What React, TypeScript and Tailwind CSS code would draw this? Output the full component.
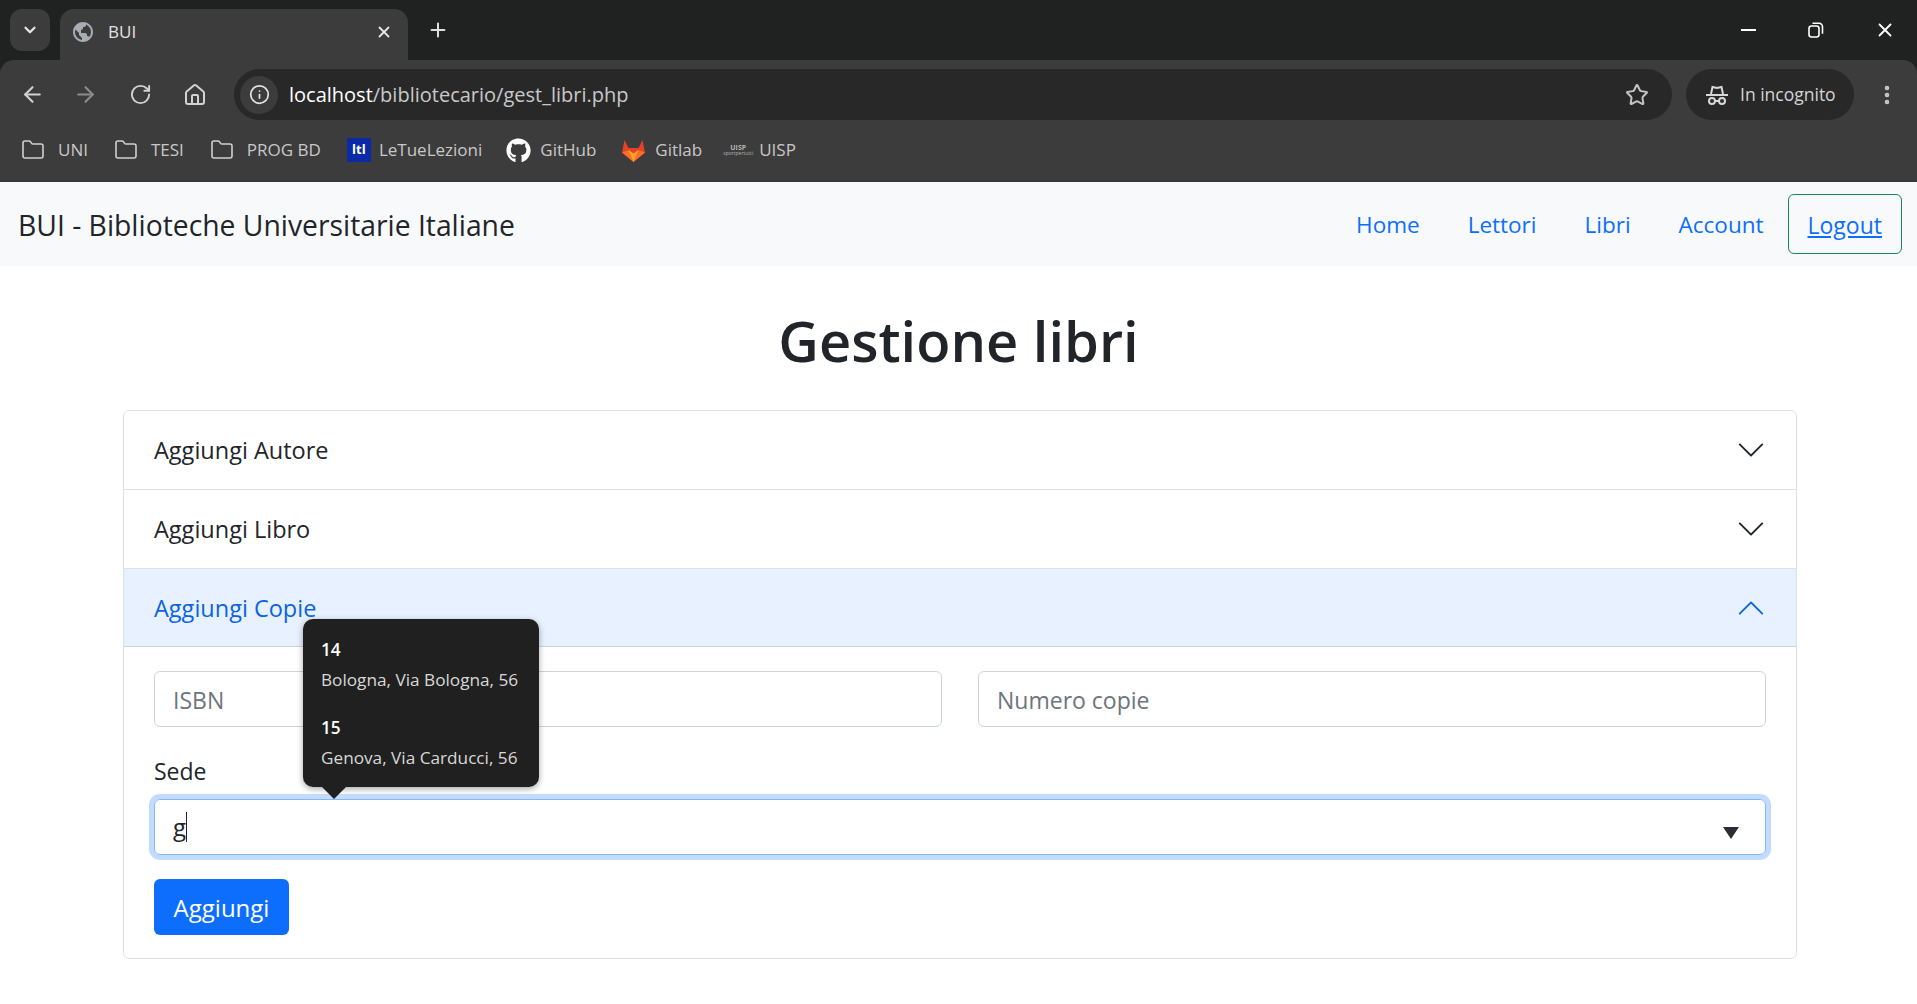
import { ArrowLeft, ArrowRight, ChevronDown, Folder, Home, Info, MoreVertical, Plus, RotateCw, Star, X } from 'lucide-react'
import { FaGithub } from 'react-icons/fa'
import { BiWorld } from 'react-icons/bi'

const BOOT_CHEVRON = 'M1.646 4.646a.5.5 0 0 1 .708 0L8 10.293l5.646-5.647a.5.5 0 0 1 .708.708l-6 6a.5.5 0 0 1-.708 0l-6-6a.5.5 0 0 1 0-.708z'

function Chevron({ up }: { up?: boolean }) {
  return (
    <svg viewBox="0 0 16 16" className={up ? 'w-[30px] h-[30px] rotate-180 fill-[#0c63e4]' : 'w-[30px] h-[30px] fill-[#212529]'}>
      <path fillRule="evenodd" d={BOOT_CHEVRON} />
    </svg>
  )
}

function Bookmark({ icon, label, className }: { icon: React.ReactNode; label: string; className: string }) {
  return (
    <div className={`flex items-center text-[17px] text-[#c8c8c8] ${className}`}>
      <span className="w-[26px] flex justify-center">{icon}</span>
      <span>{label}</span>
    </div>
  )
}

function AccordionRow({ label }: { label: string }) {
  return (
    <div className="h-[79px] border-b border-[#dee2e6] px-[30px] flex items-center justify-between text-[#212529] text-[23.5px]">
      <span className="pt-[2px]">{label}</span>
      <Chevron />
    </div>
  )
}

function BrowserChrome() {
  const folder = <Folder size={24} strokeWidth={1.6} className="text-[#d0d0d0]" />
  return (
    <div className="bg-[#202221]">
      <div className="h-[60px] flex items-end pl-[10px]">
        <div className="w-[40px] h-[42px] mb-[9px] mr-[10px] rounded-[12px] bg-[#3c3c3c] flex items-center justify-center">
          <ChevronDown size={18} strokeWidth={3} className="text-[#e6e6e6]" />
        </div>
        <div className="w-[348px] h-[51px] rounded-t-[14px] bg-[#3c3c3c] flex items-center pl-[11px] pr-[15px] pb-[5px] text-[#e2e2e2] text-[17px]">
          <BiWorld size={24} className="text-[#a8adb3]" />
          <span className="ml-[13px] flex-1">BUI</span>
          <X size={18} strokeWidth={2.4} className="text-[#e6e6e6]" />
        </div>
        <div className="h-[60px] ml-[19px] flex items-center">
          <Plus size={22} strokeWidth={2.2} className="text-[#dedede]" />
        </div>
        <div className="flex-1" />
        <div className="h-[60px] flex items-center gap-[50px] pr-[21px]">
          <div className="w-[15px] h-[2px] bg-white" />
          <svg width="18" height="18" viewBox="0 0 18 18" fill="none" stroke="white" strokeWidth="1.6" className="translate-x-[1px]">
            <rect x="2" y="5" width="10" height="11" rx="2.5" />
            <path d="M5.5 2.2h6.5a3.5 3.5 0 0 1 3.5 3.5v7" />
          </svg>
          <X size={22} strokeWidth={2} className="text-white" />
        </div>
      </div>
      <div className="h-[122px] rounded-t-[14px] bg-[#3c3c3c] border-b-2 border-[#383838]">
        <div className="h-[69px] flex items-center pl-[20px] pr-[18px]">
          <ArrowLeft size={25} strokeWidth={2} className="text-[#d2d2d2]" />
          <ArrowRight size={25} strokeWidth={2} className="ml-[28px] text-[#8c8c8c]" />
          <RotateCw size={23} strokeWidth={2} className="ml-[31px] text-[#d2d2d2]" />
          <Home size={24} strokeWidth={2} className="ml-[31px] text-[#d2d2d2]" />
          <div className="ml-[27px] flex-1 h-[51px] rounded-full bg-[#282828] flex items-center pl-[6px] pr-[23px]">
            <div className="w-[38px] h-[38px] rounded-full bg-[#3c3c3c] flex items-center justify-center">
              <Info size={21} strokeWidth={2} className="text-[#e2e2e2]" />
            </div>
            <span className="ml-[11px] flex-1 text-[20px] text-[#c8c8c8]"><span className="text-white">localhost</span>/bibliotecario/gest_libri.php</span>
            <Star size={24} strokeWidth={2} className="text-[#c4c4c4]" />
          </div>
          <div className="ml-[14px] w-[168px] h-[51px] rounded-full bg-[#282828] flex items-center pl-[19px] text-[17.5px] text-[#d4d4d4]">
            <svg width="24" height="24" viewBox="0 0 24 24" fill="none" stroke="#d8d8d8" strokeWidth="2">
              <path d="M6 11l1.5-7 4.5 1 4.5-1L18 11" />
              <path d="M1 12h22" />
              <circle cx="7" cy="18" r="3" />
              <circle cx="17" cy="18" r="3" />
              <path d="M10 18h4" />
            </svg>
            <span className="ml-[11px]">In incognito</span>
          </div>
          <MoreVertical size={24} strokeWidth={2.6} className="ml-[21px] text-[#c8c8c8]" />
        </div>
        <div className="h-[36px] flex items-center gap-[25px] pl-[20px] mt-[3px]">
          <Bookmark icon={folder} label="UNI" className="gap-[12px]" />
          <Bookmark icon={folder} label="TESI" className="gap-[12px]" />
          <Bookmark icon={folder} label="PROG BD" className="gap-[12px]" />
          <Bookmark
            icon={<div className="w-[24px] h-[24px] bg-[#0a2aa8] text-white text-[13px] font-bold flex items-center justify-center">ltl</div>}
            label="LeTueLezioni"
            className="gap-[7px]"
          />
          <Bookmark icon={<FaGithub size={25} className="text-white" />} label="GitHub" className="gap-[9px] -ml-[2px]" />
          <Bookmark
            icon={
              <svg width="25" height="25" viewBox="0 0 25 25">
                <path d="M12.5 24L1 14.5 3.5 2l4 8h10l4-8L24 14.5z" fill="#e24329" />
                <path d="M12.5 24L1 14.5l6.5-2.5 5 3.5 5-3.5 6.500 2.500z" fill="#fc6d26" />
                <path d="M12.500 24L7.500 12l5 3.500 5-3.500z" fill="#fca326" />
              </svg>
            }
            label="Gitlab"
            className="gap-[9px] -ml-[1px]"
          />
          <Bookmark
            icon={
              <div className="flex flex-col items-center leading-none text-[#b4b4b4]">
                <span className="text-[7px] font-bold">UISP</span>
                <span className="text-[5px]">sportpertutti</span>
              </div>
            }
            label="UISP"
            className="gap-[8px] -ml-[2px]"
          />
        </div>
      </div>
    </div>
  )
}

export default function App() {
  return (
    <div className="h-[1004px] overflow-hidden bg-white font-['Open_Sans',sans-serif]">
      <BrowserChrome />
      <nav className="h-[84px] bg-[#f8f9fa] flex items-center justify-between pl-[18px] pr-[15px]">
        <span className="text-[28.3px] text-[#212529] pt-[2px]">BUI - Biblioteche Universitarie Italiane</span>
        <div className="flex items-center text-[22.5px] text-[#0d6efd] gap-[48px]">
          <a className="pt-[2px]">Home</a>
          <a className="pt-[2px]">Lettori</a>
          <a className="pt-[2px]">Libri</a>
          <div className="flex items-center gap-[24px]">
            <a className="pt-[2px]">Account</a>
            <a className="h-[60px] px-[19px] pt-[2px] flex items-center border border-[#198754] rounded-[6px] underline text-[23px]">Logout</a>
          </div>
        </div>
      </nav>
      <h1 className="mt-[39px] text-center text-[56px] leading-[70px] font-semibold text-[#212529]">Gestione libri</h1>
      <div className="mt-[35px] ml-[123px] mr-[120px] border border-[#dee2e6] rounded-[6px]">
        <AccordionRow label="Aggiungi Autore" />
        <AccordionRow label="Aggiungi Libro" />
        <div className="h-[78px] border-b border-[#ced4da] bg-[#e7f1ff] px-[30px] flex items-center justify-between text-[#0c63e4] text-[23.5px]">
          <span className="pt-[2px]">Aggiungi Copie</span>
          <Chevron up />
        </div>
        <div className="relative px-[30px] pt-[24px] pb-[23px]">
          <div className="grid grid-cols-2 gap-[36px]">
            <div className="h-[56px] pt-[2px] border border-[#ced4da] rounded-[6px] px-[18px] flex items-center text-[23px] text-[#6c757d]">ISBN</div>
            <div className="h-[56px] pt-[2px] border border-[#ced4da] rounded-[6px] px-[18px] flex items-center text-[23px] text-[#6c757d]">Numero copie</div>
          </div>
          <div className="mt-[24px] pt-[2px] h-[36px] text-[23px] leading-[36px] text-[#212529]">Sede</div>
          <div className="mt-[12px] h-[56px] border border-[#86b7fe] rounded-[6px] shadow-[0_0_0_5px_#c2dbfe] px-[18px] flex items-center justify-between text-[24px] text-[#212529]">
            <span className="flex items-center">g<span className="inline-block w-[1px] h-[30px] bg-[#212529]" /></span>
            <span className="mr-[8px] mt-[12px] w-0 h-0 border-l-[8px] border-r-[8px] border-t-[12px] border-l-transparent border-r-transparent border-t-[#2a2e33]" />
          </div>
          <button className="mt-[24px] h-[56px] w-[135px] pt-[2px] bg-[#0d6efd] text-white rounded-[6px] text-[24px]">Aggiungi</button>

          <div className="absolute left-[179px] top-[-28px] w-[236px] h-[168px] bg-[#202020] rounded-[10px] shadow-[0_2px_6px_rgba(0,0,0,0.35)] pl-[18px] pt-[18px] text-[17.2px] text-[#d8d8d8]">
            <div className="font-semibold text-white leading-[26px]">14</div>
            <div className="mt-[4px] leading-[26px]">Bologna, Via Bologna, 56</div>
            <div className="mt-[22px] font-semibold text-white leading-[26px]">15</div>
            <div className="mt-[4px] leading-[26px]">Genova, Via Carducci, 56</div>
            <span className="absolute left-[19px] top-[168px] w-0 h-0 border-l-[12px] border-r-[12px] border-t-[12px] border-l-transparent border-r-transparent border-t-[#202020]" />
          </div>
        </div>
      </div>
    </div>
  )
}
